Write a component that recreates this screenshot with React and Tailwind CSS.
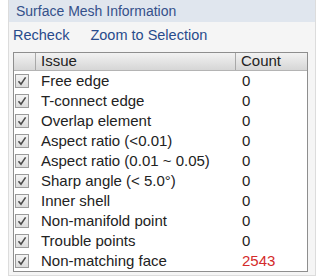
import React from 'react';

const issues = [
  { name: 'Free edge', count: '0' },
  { name: 'T-connect edge', count: '0' },
  { name: 'Overlap element', count: '0' },
  { name: 'Aspect ratio (<0.01)', count: '0' },
  { name: 'Aspect ratio (0.01 ~ 0.05)', count: '0' },
  { name: 'Sharp angle (< 5.0°)', count: '0' },
  { name: 'Inner shell', count: '0' },
  { name: 'Non-manifold point', count: '0' },
  { name: 'Trouble points', count: '0' },
  { name: 'Non-matching face', count: '2543', bad: true },
];

function Check() {
  return (
    <div className="w-[14px] h-[14px] border border-[#9a9a9a] bg-gradient-to-b from-[#f4f4f4] to-[#dcdcdc] flex items-center justify-center">
      <svg width="10" height="10" viewBox="0 0 10 10">
        <path d="M1.5 5.2 L4 8.2 L8.6 1.4" fill="none" stroke="#4a4a4a" strokeWidth="1.6" />
      </svg>
    </div>
  );
}

export default function App() {
  return (
    <div className="w-[324px] h-[278px] bg-white font-['Liberation_Sans',Arial,sans-serif] text-[15px] text-[#222]">
      <div className="ml-[8px] w-[308px] h-[276px] bg-[#f5f5f5] border-x border-b border-[#dcdcdc] flex flex-col">
        <div className="h-[22px] bg-[#e0e6ee] text-[#34508a] text-[14px] pl-[7px] flex items-center">
          Surface Mesh Information
        </div>
        <div className="h-[30px] flex items-center gap-[21px] pl-[4px] pb-[2px] text-[14.5px] text-[#284b8c]">
          <span>Recheck</span>
          <span>Zoom to Selection</span>
        </div>
        <div className="ml-[4px] mr-[7px] border border-[#8e8e8e] bg-white">
          <div className="flex h-[18px] bg-gradient-to-b from-[#f2f2f2] to-[#d6d6d6] border-b border-[#b4b4b4]">
            <div className="w-[22px] border-r border-[#a8a8a8]" />
            <div className="w-[200px] border-r border-[#a8a8a8] pl-[5px] flex items-center">Issue</div>
            <div className="flex-1 pl-[5px] flex items-center">Count</div>
          </div>
          {issues.map((it) => (
            <div key={it.name} className="flex h-[20px] items-center">
              <div className="w-[22px] pl-[1px]">
                <Check />
              </div>
              <div className="w-[200px] pl-[5px]">{it.name}</div>
              <div className={`flex-1 pl-[6px] ${it.bad ? 'text-[#d42b2b]' : ''}`}>{it.count}</div>
            </div>
          ))}
        </div>
      </div>
    </div>
  );
}
